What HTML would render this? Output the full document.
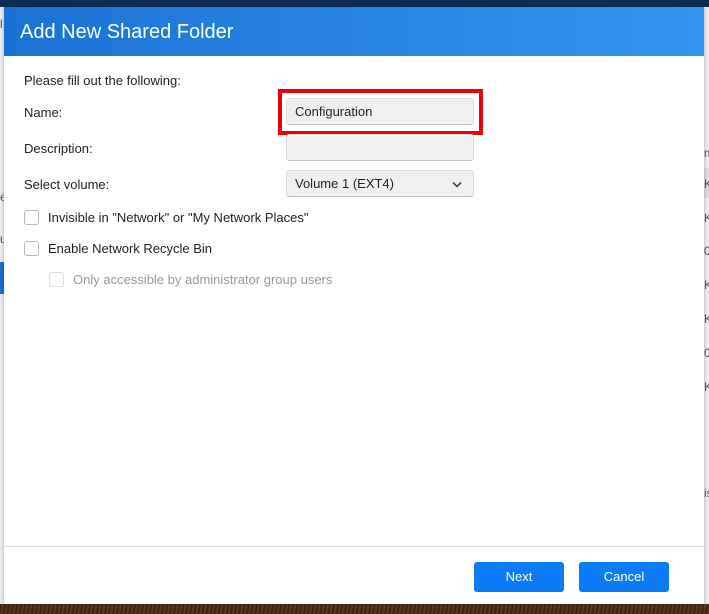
<!DOCTYPE html>
<html><head><meta charset="utf-8"><style>
*{margin:0;padding:0;box-sizing:border-box}
body{width:709px;height:614px;overflow:hidden;background:#e9ebee;font-family:"Liberation Sans",sans-serif;position:relative}
.top{position:absolute;left:0;top:0;width:709px;height:7px;background:#0f2d52}
.bot{position:absolute;left:0;top:604px;width:709px;height:10px;background:repeating-linear-gradient(100deg,#3a2412 0 2px,#5a3a1e 2px 4px)}
.side{position:absolute;font-size:12px;color:#555}
.dlg{position:absolute;left:4px;top:7px;width:700px;height:597px;background:#fff;box-shadow:0 0 3px rgba(0,0,0,.3)}
.hd{height:49px;background:linear-gradient(90deg,#1b72d6,#3494f1);color:#fff;font-size:20px;padding:14px 0 0 16px}
.t{position:absolute;font-size:13px;color:#222}
.inp{position:absolute;left:282px;width:188px;height:27px;background:#f0f0f0;border:1px solid #dcdcdc;border-bottom-color:#c4c4c4;border-radius:3px;font-size:13px;color:#222;padding:5px 8px}
.cb{position:absolute;width:15px;height:15px;border:1px solid #b8b8b8;border-radius:3px;background:#fff}
.btn{position:absolute;top:555px;width:90px;height:30px;background:#0a7cf5;border-radius:3px;color:#fff;font-size:13px;text-align:center;line-height:30px}
</style></head><body>
<div class="top"></div>
<div class="side" style="left:0;top:17px">l</div>
<div class="side" style="left:0;top:190px">e</div>
<div class="side" style="left:0;top:232px">u</div>
<div style="position:absolute;left:0;top:262px;width:4px;height:32px;background:#1d6fd0"></div>
<div class="side" style="left:704px;top:146px">m</div>
<div style="position:absolute;left:704px;top:168px;width:5px;height:30px;background:#d8dadd"></div>
<div class="side" style="left:704px;top:177px">K</div>
<div class="side" style="left:704px;top:211px">K</div>
<div class="side" style="left:704px;top:244px">0</div>
<div class="side" style="left:704px;top:278px">K</div>
<div class="side" style="left:704px;top:312px">K</div>
<div class="side" style="left:704px;top:346px">0</div>
<div class="side" style="left:704px;top:380px">K</div>
<div class="side" style="left:704px;top:486px">is</div>
<div class="bot"></div>
<div class="dlg">
<div class="hd">Add New Shared Folder</div>
<div class="t" style="left:20px;top:66px">Please fill out the following:</div>
<div class="t" style="left:20px;top:98px">Name:</div>
<div class="t" style="left:20px;top:134px">Description:</div>
<div class="t" style="left:20px;top:170px">Select volume:</div>
<div style="position:absolute;left:274px;top:82px;width:205px;height:46px;border:4px solid #e8000b"></div>
<div class="inp" style="top:91px">Configuration</div>
<div class="inp" style="top:127px"></div>
<div class="inp" style="top:163px">Volume 1 (EXT4)<svg style="position:absolute;right:11px;top:10px" width="10" height="7" viewBox="0 0 10 7"><path d="M1 1.5L5 5.5L9 1.5" fill="none" stroke="#444" stroke-width="1.6"/></svg></div>
<div class="cb" style="left:20px;top:203px"></div>
<div class="t" style="left:44px;top:203px">Invisible in "Network" or "My Network Places"</div>
<div class="cb" style="left:20px;top:234px"></div>
<div class="t" style="left:44px;top:234px">Enable Network Recycle Bin</div>
<div class="cb" style="left:45px;top:265px;border-color:#ddd"></div>
<div class="t" style="left:69px;top:265px;color:#999">Only accessible by administrator group users</div>
<div style="position:absolute;left:0;top:539px;width:700px;height:1px;background:#dcdcdc"></div>
<div class="btn" style="left:470px">Next</div>
<div class="btn" style="left:575px">Cancel</div>
</div>
</body></html>
